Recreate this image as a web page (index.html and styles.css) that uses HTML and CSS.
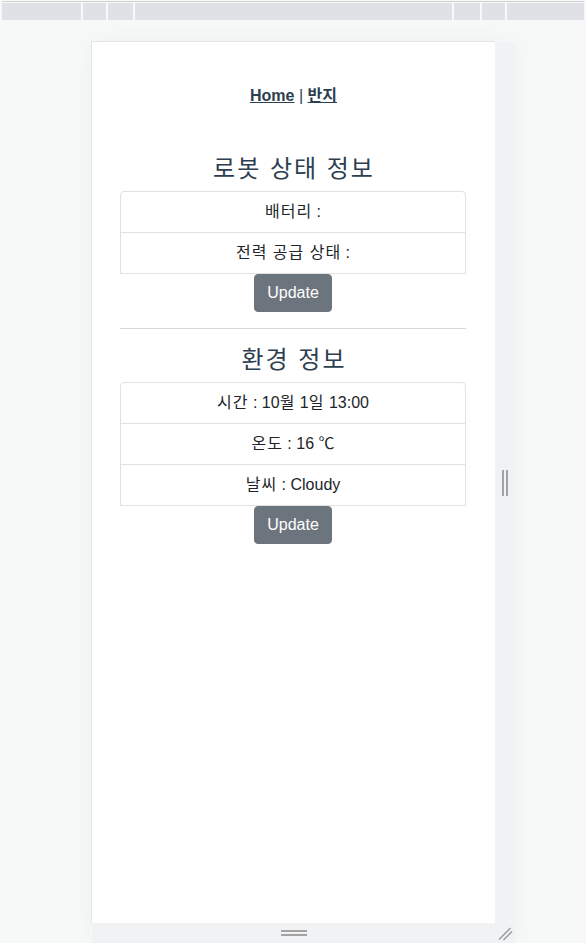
FILE: index.html
```html
<!DOCTYPE html>
<html lang="ko">
<head>
<meta charset="utf-8">
<title>Robot</title>
<link rel="stylesheet" href="styles.css">
</head>
<body>
<div class="toolbar">
  <div class="seg seg-a"></div>
  <div class="seg seg-b"></div>
  <div class="seg seg-c"></div>
  <div class="seg seg-d"></div>
  <div class="seg seg-e"></div>
  <div class="seg seg-f"></div>
  <div class="seg seg-g"></div>
</div>
<div class="stage">
  <div class="device">
    <div class="viewport">
      <div id="app">
        <nav class="nav">
          <a href="#">Home</a> | <a href="#">반지</a>
        </nav>
        <div class="content">
          <h4 class="title">로봇 상태 정보</h4>
          <ul class="list">
            <li class="item"><span class="ko">배터리</span> :</li>
            <li class="item"><span class="ko">전력 공급 상태</span> :</li>
          </ul>
          <div class="btn-row"><button class="btn">Update</button></div>
          <hr class="rule">
          <h4 class="title">환경 정보</h4>
          <ul class="list">
            <li class="item"><span class="ko">시간</span> : 10<span class="ko">월</span> 1<span class="ko">일</span> 13:00</li>
            <li class="item"><span class="ko">온도</span> : 16 ℃</li>
            <li class="item"><span class="ko">날씨</span> : Cloudy</li>
          </ul>
          <div class="btn-row"><button class="btn">Update</button></div>
        </div>
      </div>
    </div>
    <div class="handle-right"><span class="vbar"></span><span class="vbar"></span></div>
    <div class="handle-bottom"><span class="hbar"></span><span class="hbar"></span></div>
    <div class="corner">
      <svg width="20" height="20" viewBox="0 0 20 20">
        <line x1="4" y1="16.5" x2="15.5" y2="5" stroke="#9a9a9a" stroke-width="1.4"/>
        <line x1="8.5" y1="17" x2="17" y2="8.5" stroke="#9a9a9a" stroke-width="1.4"/>
      </svg>
    </div>
  </div>
</div>
</body>
</html>
```
FILE: styles.css
```css
html, body {
  margin: 0;
  padding: 0;
}
body {
  background: #f7f8f8;
  width: 586px;
  height: 943px;
  overflow: hidden;
  font-family: "Liberation Sans", Arial, "Noto Sans CJK KR", sans-serif;
}
.toolbar {
  margin: 1px 2px 0 2px;
  border-top: 1px solid #cfd1d5;
  padding-top: 1px;
  display: flex;
  gap: 2px;
  height: 19px;
  box-sizing: border-box;
  background: #f7f8f8;
}
.seg {
  background: #dfe1e6;
  height: 17px;
}
.seg-a { width: 79px; }
.seg-b { width: 23px; }
.seg-c { width: 25px; }
.seg-d { width: 317px; }
.seg-e { width: 26px; }
.seg-f { width: 23px; }
.seg-g { flex: 1; }
.stage {
  padding-top: 21px;
  padding-left: 91px;
}
.device {
  display: grid;
  grid-template-columns: 404px 20px;
  grid-template-rows: 882px 20px;
  width: 424px;
  box-shadow: 0 0 24px rgba(0, 0, 0, 0.04);
}
.viewport {
  background: #fff;
  border-left: 1px solid #e3e4e6;
  border-top: 1px solid #e3e4e6;
  overflow: hidden;
}
.handle-right {
  margin-top: 1px;
  background: #f1f2f4;
  display: flex;
  align-items: center;
  justify-content: center;
  gap: 2px;
}
.vbar {
  width: 2px;
  height: 26px;
  background: #a3a3a3;
}
.handle-bottom {
  margin-left: 1px;
  background: #f1f2f4;
  display: flex;
  flex-direction: column;
  align-items: center;
  justify-content: center;
  gap: 2px;
}
.hbar {
  width: 26px;
  height: 2px;
  background: #a3a3a3;
}
.corner {
  background: #f1f2f4;
}
.corner svg {
  display: block;
}
#app {
  color: #2c3e50;
  text-align: center;
  font-size: 16px;
  line-height: 24px;
}
.nav {
  padding: 42px 0 46px;
}
.nav a {
  color: #2c3e50;
  font-weight: bold;
  text-decoration: underline;
}
.content {
  padding: 0 29px 0 28px;
}
.title {
  margin: 0 0 8px;
  font-size: 24px;
  line-height: 29px;
  font-weight: 400;
  color: #2c3e50;
  letter-spacing: 2px;
  text-indent: 2px;
}
.list {
  list-style: none;
  margin: 0;
  padding: 0;
}
.item {
  border: 1px solid #dfe1e3;
  margin-bottom: -1px;
  padding: 8px 12px;
  color: #212529;
  line-height: 24px;
}
.ko {
  letter-spacing: 1px;
}
.item:first-child {
  border-top-left-radius: 4px;
  border-top-right-radius: 4px;
}
.btn-row {
  padding-top: 1px;
  text-align: center;
  height: 38px;
}
.btn {
  display: inline-block;
  font-family: "Liberation Sans", Arial, sans-serif;
  font-size: 16px;
  line-height: 24px;
  padding: 6px 12px;
  border: 1px solid #6c757d;
  background: #6c757d;
  color: #fff;
  border-radius: 4px;
  margin: 0;
  vertical-align: top;
}
.rule {
  margin: 16px 0;
  border: 0;
  border-top: 1px solid #d3d6da;
  height: 0;
}
```
